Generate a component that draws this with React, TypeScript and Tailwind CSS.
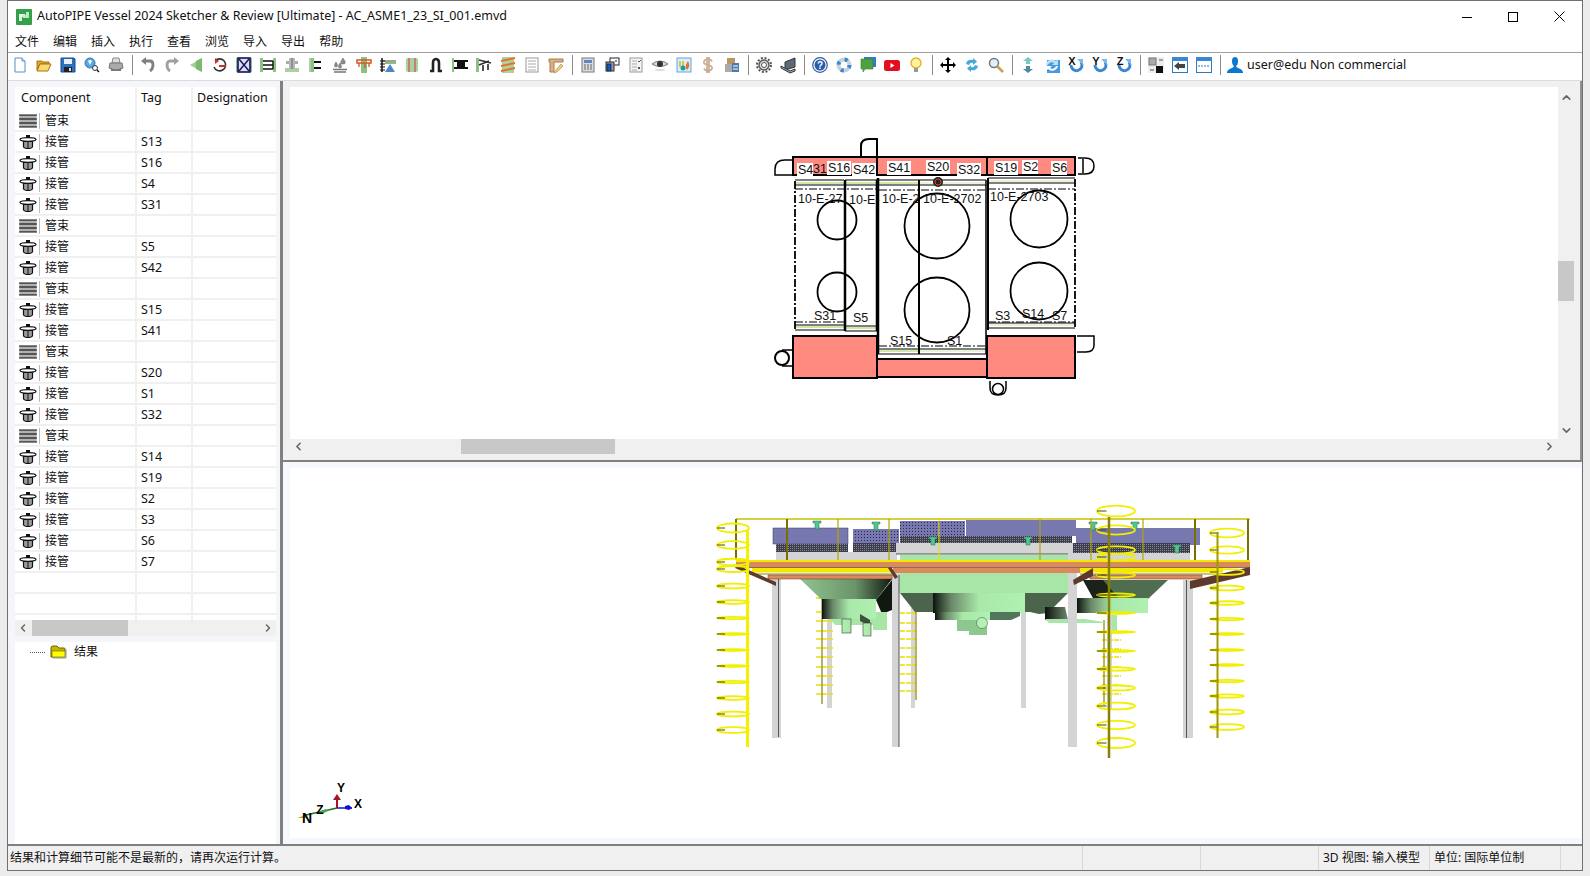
import React from 'react';
import { ChevronLeft, ChevronRight, ChevronUp, ChevronDown } from 'lucide-react';

const uiFont = "font-['Noto_Sans','Noto_Sans_CJK_SC',sans-serif]";

const menus = ['文件', '编辑', '插入', '执行', '查看', '浏览', '导入', '导出', '帮助'];

const rows: [string, string][] = [
  ['b', ''], ['n', 'S13'], ['n', 'S16'], ['n', 'S4'], ['n', 'S31'],
  ['b', ''], ['n', 'S5'], ['n', 'S42'],
  ['b', ''], ['n', 'S15'], ['n', 'S41'],
  ['b', ''], ['n', 'S20'], ['n', 'S1'], ['n', 'S32'],
  ['b', ''], ['n', 'S14'], ['n', 'S19'], ['n', 'S2'], ['n', 'S3'], ['n', 'S6'], ['n', 'S7'],
];

const BundleIcon = () => (
  <svg width="18" height="14" viewBox="0 0 18 14">
    <rect x="0.5" y="1" width="17" height="12" fill="#9a9a9a" />
    <path d="M0 1h18M0 5h18M0 9h18M0 13h18" stroke="#111" strokeWidth="1.2" />
    <path d="M0 3h18M0 7h18M0 11h18" stroke="#c8c8c8" strokeWidth="1" />
  </svg>
);

const NozzleIcon = () => (
  <svg width="18" height="14" viewBox="0 0 18 14">
    <rect x="7" y="0" width="4" height="3" fill="#111" />
    <ellipse cx="9" cy="4.5" rx="8" ry="1.8" fill="#fff" stroke="#111" strokeWidth="1.3" />
    <path d="M4.500 6.500h9v5.500q-1 1.500-4.500 1.500t-4.500-1.500z" fill="#9a9a9a" stroke="#111" strokeWidth="1.2" />
    <path d="M9 6.500v7" stroke="#111" strokeWidth="1" />
  </svg>
);

const G = '#8cc084';
const icons: Record<string, React.ReactNode> = {
  newDoc: <><path d="M3 1h7l3 3v11H3z" fill="#fff" stroke="#5b8ec4" /><path d="M10 1v3h3" fill="#dbe8f5" stroke="#5b8ec4" /></>,
  open: <><path d="M1 4h5l1 1h6v2H4L1 13z" fill="#e0a52e" stroke="#a87510" /><path d="M4 7h11l-3 7H1z" fill="#f8d870" stroke="#a87510" /></>,
  save: <><path d="M1 1h13l1 1v13H1z" fill="#2f6fc0" stroke="#1d4c8c" /><rect x="4" y="2" width="8" height="5" fill="#e8f0fa" /><rect x="4" y="10" width="8" height="5" fill="#222" /><rect x="9" y="11" width="2" height="3" fill="#ddd" /></>,
  find: <><circle cx="6" cy="6" r="5" fill="#58a8e0" stroke="#2e78b8" /><path d="M4 4q2-2 4 0l-2 4z" fill="#fff" /><circle cx="11" cy="11" r="2.5" fill="#fff" stroke="#333" /><path d="M13 13l2 2" stroke="#111" strokeWidth="1.5" /></>,
  print: <><path d="M5 1h6l1 5H4z" fill="#ddd" stroke="#888" /><path d="M2 6h12l1 5q-7 4-14 0z" fill="#aaa" stroke="#777" /><path d="M3 11q5 3 10 0v3H3z" fill="#777" /></>,
  undo: <><path d="M5 4h5q3 0 3 4t-3 6" fill="none" stroke="#808080" strokeWidth="2.800" /><path d="M6 0v8L1 4z" fill="#808080" /></>,
  redo: <><path d="M11 4H6q-3 0-3 4t3 6" fill="none" stroke="#a0a0a0" strokeWidth="2.800" /><path d="M10 0v8l5-4z" fill="#a0a0a0" /></>,
  greenLeft: <><path d="M14 1v14L2 8z" fill="#9dd08c" /><path d="M14 1v14l-6-3V4z" fill="#7cb870" /></>,
  loop: <><path d="M3 4a6 6 0 1 1-1 6" fill="none" stroke="#333" strokeWidth="1.6" /><path d="M7 4L3 1v6z" fill="#c43030" /><path d="M7 8h7v2H7z" fill="#c43030" /></>,
  xbox: <><rect x="0" y="1" width="2" height="14" fill={G} /><rect x="14" y="1" width="2" height="14" fill={G} /><rect x="2" y="1" width="12" height="14" fill="#dde" stroke="#12125e" strokeWidth="1.6" /><path d="M3 2l10 12M13 2L3 14" stroke="#12125e" strokeWidth="1.4" /></>,
  flange1: <><rect x="0" y="1" width="3" height="14" fill={G} /><rect x="13" y="1" width="3" height="14" fill={G} /><path d="M3 4h10M3 8h10M3 12h10" stroke="#111" strokeWidth="1.6" /><path d="M13 4v8" stroke="#111" strokeWidth="1.4" /></>,
  support: <><rect x="1" y="11" width="14" height="4" fill="#acd0a0" /><rect x="2" y="4" width="12" height="3" fill="#aaa" /><rect x="5" y="1" width="6" height="11" fill="#b8b8b8" /><path d="M8 1v11" stroke="#666" /></>,
  side: <><rect x="1" y="1" width="5" height="14" fill={G} /><rect x="1" y="1" width="2" height="14" fill="#acd0a0" /><path d="M6 5h7M6 11h7" stroke="#111" strokeWidth="2.2" /></>,
  drops: <><path d="M4 5c-2 3-2 5 0 5s2-2 0-5zM11 1c-3 4-3 6 0 6s3-2 0-6zM8 6c-2 3-2 5 0 5s2-2 0-5z" fill="#8a8a8a" stroke="#666" strokeWidth="0.500" /><path d="M1 12.500h14M2 15h12" stroke="#777" strokeWidth="1.5" /></>,
  clamp: <><rect x="5" y="0" width="6" height="16" fill={G} /><path d="M1 3h14v3H1z" fill="none" stroke="#d05a20" strokeWidth="1.5" /><path d="M3 6v4M13 6v4M9 6v5" stroke="#d05a20" strokeWidth="1.3" /></>,
  saddle: <><path d="M2 1v14" stroke="#111" strokeWidth="1.5" /><path d="M0 4h5M0 7h5M0 10h5M0 13h5" stroke="#111" /><path d="M3 4h13" stroke="#111" strokeWidth="0.8" /><path d="M10 7l5 8H5z" fill="#4a88c8" /><path d="M5 5h11v2H5z" fill="#8fbc80" /></>,
  cyl: <><rect x="2" y="1" width="12" height="14" rx="2" fill="#acd0a0" /><path d="M5 1v14M11 1v14" stroke="#c84040" /></>,
  omega: <path d="M2 14h3V6q0-4 3-4t3 4v8h3" fill="none" stroke="#222" strokeWidth="2.6" />,
  tbar: <><rect x="0" y="1" width="2" height="14" fill={G} /><path d="M2 4h14M2 11h14" stroke="#111" strokeWidth="2" /><rect x="5" y="4" width="8" height="7" fill="#111" /></>,
  hatch: <><rect x="0" y="1" width="3" height="14" fill={G} /><path d="M3 3l12 3M3 8l10-4M7 8v6M12 7v6" stroke="#333" strokeWidth="1.7" /></>,
  coil: <><rect x="2" y="0" width="12" height="16" fill="#acd0a0" /><path d="M1 4l14-3M1 9l14-3M1 14l14-3" stroke="#e87020" strokeWidth="1.8" /></>,
  list: <><rect x="2" y="1" width="12" height="14" fill="#fff" stroke="#999" /><path d="M4 4h8M4 7h8M4 10h8M4 13h8" stroke="#aaa" /></>,
  ruler: <><path d="M1 2h14v3H6v10H2V5H1z" fill="#dcb080" stroke="#a87c50" /><path d="M7 14l6-7 2 2-6 6-3 1z" fill="#f6d04c" stroke="#888" strokeWidth="0.6" /></>,
  calc: <><rect x="2" y="1" width="12" height="14" fill="#ddd" stroke="#777" /><rect x="4" y="3" width="8" height="3" fill="#5f84c8" /><path d="M4 8h2M7 8h2M10 8h2M4 10h2M7 10h2M10 10h2M4 12h2M7 12h2M10 12h2" stroke="#666" strokeWidth="1.2" /></>,
  cards: <><rect x="6" y="1" width="9" height="7" fill="#fff" stroke="#223" /><path d="M11 4h2" stroke="#223" /><rect x="2" y="5" width="8" height="9" fill="#999" stroke="#333" /><rect x="3" y="7" width="4" height="7" fill="#1058c8" stroke="#111" strokeWidth="0.6" /></>,
  check: <><rect x="2" y="1" width="12" height="14" fill="#f4f4f4" stroke="#999" /><path d="M4 4h5M4 7h5M4 10h5M4 13h5" stroke="#aaa" /><path d="M10 4l1 1 2-2M10 10l2 2M12 10l-2 2" stroke="#555" fill="none" /></>,
  eye: <><path d="M0 7q8-6 16 0q-8 5-16 0z" fill="#ddd" stroke="#777" /><circle cx="8" cy="7" r="3" fill="#333" /><ellipse cx="8" cy="13" rx="5" ry="1" fill="#ddd" /></>,
  chart: <><rect x="1" y="1" width="14" height="14" fill="#dcecfa" stroke="#5aa8e0" /><path d="M11 13q-3-3 1-9 3 5-1 9z" fill="#e87020" /><path d="M4 4v6M7 4v5" stroke="#d0c020" strokeWidth="1.6" /><circle cx="7" cy="11" r="2.500" fill="#2098a8" /></>,
  dollar: <path d="M12 4.500q-1-2.500-4-2.500t-4 2.500 4 3.500 4 3.500-4 2.500-4-2.500M7 0v16M9 0v16" fill="none" stroke="#c8aa90" strokeWidth="1.7" />,
  boxes: <><rect x="3" y="1" width="8" height="8" fill="#b89860" /><rect x="1" y="7" width="7" height="8" fill="#aaa" /><rect x="8" y="6" width="7" height="9" fill="#4a7cb0" /><path d="M9 9h5M9 12h5" stroke="#fff" /></>,
  gear: <><circle cx="8" cy="8" r="5" fill="#ddd" stroke="#555" strokeWidth="1.4" /><circle cx="8" cy="8" r="7" fill="none" stroke="#555" strokeWidth="2" strokeDasharray="2 1.7" /><circle cx="8" cy="8" r="2.500" fill="#fff" stroke="#555" /></>,
  laptop: <><path d="M5 5l10-4v9l-10 3z" fill="#5d6a78" stroke="#333" /><path d="M1 9l9 5 5-2v2l-5 2-9-5z" fill="#9ab0c0" stroke="#333" /></>,
  help: <><circle cx="8" cy="8" r="7.300" fill="#fff" stroke="#2a5ca8" strokeWidth="1.200" /><circle cx="8" cy="8" r="5.500" fill="#2a5ca8" /><text x="8" y="11.500" textAnchor="middle" fontSize="10" fontWeight="700" fill="#fff" fontFamily="Liberation Sans">?</text></>,
  buoy: <><circle cx="8" cy="8" r="5.500" fill="none" stroke="#c8d0d8" strokeWidth="4" /><circle cx="8" cy="8" r="5.500" fill="none" stroke="#3a88d0" strokeWidth="4" strokeDasharray="3 5.640" /></>,
  chat: <><rect x="4" y="0" width="12" height="10" fill="#2a80d0" /><path d="M1 2h12v10H5l-2 3v-3H1z" fill="#50a040" stroke="#3c8030" strokeWidth="0.6" /></>,
  youtube: <><rect x="0" y="3" width="16" height="11" rx="2.500" fill="#e01020" /><path d="M6.500 6v5l4-2.500z" fill="#fff" /></>,
  bulb: <><circle cx="8" cy="6" r="5" fill="#fff3a0" stroke="#e0b020" strokeWidth="1.300" /><rect x="6" y="11" width="4" height="4" fill="#999" /></>,
  move: <path d="M8 0l3 3H9v4h4V5l3 3-3 3V9H9v4h2l-3 3-3-3h2V9H3v2L0 8l3-3v2h4V3H5z" fill="#000" />,
  rotate: <><path d="M2 7q1-5 7-4V1l4 3.500L9 8V6q-3-1-4 2z" fill="#48a8d8" /><path d="M14 9q-1 5-7 4v2l-4-3.500L7 8v2q3 1 4-2z" fill="#48a8d8" /></>,
  zoom: <><circle cx="6" cy="6" r="4.500" fill="#dff0fa" stroke="#777" strokeWidth="1.500" /><path d="M9.500 9.500L15 15" stroke="#c8a050" strokeWidth="2.500" /></>,
  updown: <><path d="M8 0l5 4h-3v3H6V4H3z" fill="#78c8c8" /><path d="M8 16l5-4h-3V9H6v3H3z" fill="#4a8c9c" /></>,
  bluerot: <><rect x="3" y="3" width="13" height="13" fill="#4898e0" /><path d="M2 8a6 6 0 0 1 10-4l2-2v6H8l2-2a4 4 0 0 0-6 2z" fill="#b8e0f8" /><path d="M14 9a6 6 0 0 1-10 3l-2 2V9h6l-2 2a4 4 0 0 0 6-2z" fill="#fff" /></>,
  rotX: <><path d="M3 8a5.500 5.500 0 1 0 10-3" fill="none" stroke="#3a88d0" strokeWidth="3" /><path d="M9 2h6v6z" fill="#7ab8ec" /><text x="4" y="8" textAnchor="middle" fontSize="11" fontWeight="700" fill="#111" fontFamily="Liberation Sans">X</text></>,
  rotY: <><path d="M3 8a5.500 5.500 0 1 0 10-3" fill="none" stroke="#3a88d0" strokeWidth="3" /><path d="M9 2h6v6z" fill="#7ab8ec" /><text x="4" y="8" textAnchor="middle" fontSize="11" fontWeight="700" fill="#111" fontFamily="Liberation Sans">Y</text></>,
  rotZ: <><path d="M3 8a5.500 5.500 0 1 0 10-3" fill="none" stroke="#3a88d0" strokeWidth="3" /><path d="M9 2h6v6z" fill="#7ab8ec" /><text x="4" y="8" textAnchor="middle" fontSize="11" fontWeight="700" fill="#111" fontFamily="Liberation Sans">Z</text></>,
  swap: <><rect x="0" y="0" width="16" height="16" fill="#eee" /><rect x="1" y="1" width="7" height="7" fill="#aaa" stroke="#777" /><rect x="8" y="9" width="7" height="7" fill="#111" /><path d="M11 3h4M2 13h4" stroke="#555" /></>,
  back: <><rect x="0.500" y="0.500" width="15" height="15" fill="#fff" stroke="#2f78c8" /><rect x="0" y="0" width="16" height="4" fill="#3a88d0" /><path d="M2 9l5-4v2h6v4H7v2z" fill="#444" /></>,
  split: <><rect x="0.500" y="0.500" width="15" height="15" fill="#fff" stroke="#2f78c8" /><rect x="0" y="0" width="16" height="4" fill="#3a88d0" /><path d="M2 9h12" stroke="#2f78c8" strokeDasharray="2 1" /></>,
  user: <path d="M8 0q3 0 3 4t-2 5q0 1 2 2 4 1 5 4v1H0v-1q1-3 5-4 2-1 2-2-2-1-2-5t3-4z" fill="#0a78d0" />,
};

const toolbar = [
  'newDoc', 'open', 'save', 'find', 'print', '|',
  'undo', 'redo', 'greenLeft', 'loop', 'xbox', 'flange1', 'support', 'side', 'drops', 'clamp', 'saddle', 'cyl', 'omega', 'tbar', 'hatch', 'coil', 'list', 'ruler', '|',
  'calc', 'cards', 'check', 'eye', 'chart', 'dollar', 'boxes', '|',
  'gear', 'laptop', '|',
  'help', 'buoy', 'chat', 'youtube', 'bulb', '|',
  'move', 'rotate', 'zoom', '|',
  'updown', 'bluerot', 'rotX', 'rotY', 'rotZ', '|',
  'swap', 'back', 'split', '|',
];

const Toolbar = () => (
  <div className="flex h-[29px] items-center border-t border-b border-t-[#a0a0a0] border-b-[#dcdcdc] bg-white pb-[3px]">
    {toolbar.map((name, i) =>
      name === '|' ? (
        <div key={i} className="flex h-[20px] w-[8px] justify-center">
          <div className="h-full w-px bg-[#888]" />
        </div>
      ) : (
        <div key={i} className="flex w-[24px] justify-center">
          <svg width="16" height="16" viewBox="0 0 16 16" overflow="visible">{icons[name]}</svg>
        </div>
      ),
    )}
    <svg width="16" height="16" viewBox="0 0 16 16" className="ml-[3px]">{icons.user}</svg>
    <span className="ml-[4px] text-[12.5px] text-[#111]">user@edu Non commercial</span>
  </div>
);

const LeftPane = () => (
  <div className="flex h-full w-[272px] flex-col bg-[#f4f6fa] pl-[7px] pr-[4px] pt-[6px]">
    <div className="h-[533px] overflow-hidden bg-white text-[12.5px] text-[#111]">
      <div className="flex h-[24px] items-center">
        <div className="h-full w-[122px] border-r-2 border-r-[#f0f0f0] pl-[6px] leading-[22px]">Component</div>
        <div className="h-full w-[56px] border-r-2 border-r-[#f0f0f0] pl-[4px] leading-[22px]">Tag</div>
        <div className="h-full pl-[4px] leading-[22px]">Designation</div>
      </div>
      {rows.map(([kind, tag], i) => (
        <div key={i} className="flex h-[21px] border-b-2 border-b-[#f0f0f0]">
          <div className="flex w-[122px] items-center border-r-2 border-r-[#f0f0f0] pl-[4px]">
            {kind === 'b' ? <BundleIcon /> : <NozzleIcon />}
            <div className="ml-[2px] h-[16px] w-px bg-[#bbb]" />
            <span className="ml-[5px] text-[12px]">{kind === 'b' ? '管束' : '接管'}</span>
          </div>
          <div className="w-[56px] border-r-2 border-r-[#f0f0f0] pl-[4px] leading-[19px]">{tag}</div>
        </div>
      ))}
      {[0, 1, 2].map((i) => (
        <div key={i} className="flex h-[21px] border-b-2 border-b-[#f0f0f0]">
          <div className="w-[122px] border-r-2 border-r-[#f0f0f0]" />
          <div className="w-[56px] border-r-2 border-r-[#f0f0f0]" />
        </div>
      ))}
    </div>
    <div className="flex h-[16px] items-center bg-[#f0f0f0]">
      <ChevronLeft size={12} strokeWidth={3} className="ml-[2px] text-[#666]" />
      <div className="ml-[3px] h-full w-[96px] bg-[#c8c8c8]" />
      <ChevronRight size={12} strokeWidth={3} className="ml-auto mr-[2px] text-[#666]" />
    </div>
    <div className="mt-[6px] flex-1 bg-white">
      <div className="flex items-center pt-[1px] pl-[15px]">
        <div className="w-[15px] border-t border-dotted border-t-[#555]" />
        <svg width="17" height="14" viewBox="0 0 17 14" className="ml-[5px]">
          <path d="M1 3q0-2 2-2h4l2 2h5q1 0 1 1v8H1z" fill="#c8b400" stroke="#6a6000" />
          <rect x="2" y="6" width="13" height="6" fill="#ffff00" stroke="#6a6000" strokeWidth="0.6" />
          <path d="M16 4v9H3" stroke="#999" fill="none" />
        </svg>
        <span className="ml-[7px] text-[12px] text-[#111]">结果</span>
      </div>
    </div>
  </div>
);

const topLabels: [string, number, number][] = [
  ['S4', 798, 174], ['S16', 828, 172], ['S42', 853, 174], ['S41', 888, 172], ['S20', 927, 171], ['S32', 958, 174],
  ['S19', 995, 172], ['S2', 1023, 171], ['S6', 1052, 172],
];

// x, width, top, bottom of each bundle in the plan view
const bundles: [number, number, number, number][] = [
  [795, 49, 180, 330],
  [845, 32, 180, 331],
  [878, 41, 180, 354],
  [919, 67, 180, 354],
  [988, 87, 178, 328],
];

const TopSketch = () => (
  <svg width="1268" height="352" viewBox="290 87 1268 352" className="block bg-white font-['Liberation_Sans',sans-serif]">
    <g fill="#ff8a80" stroke="#000" strokeWidth="2">
      <rect x="793" y="157" width="282" height="18" />
      <rect x="793" y="336" width="84" height="42" />
      <rect x="877" y="359" width="110" height="18" />
      <rect x="987" y="336" width="88" height="42" />
    </g>
    <path d="M877 157v18M987 157v18" stroke="#000" strokeWidth="2" />
    <g fill="none" stroke="#000" strokeWidth="1.500">
      <path d="M793 175h-18v-6q0-9 10-9h8" />
      <path d="M861 157v-11q0-7 8-7h8v18" strokeWidth="2" />
      <path d="M1078 158h7q9 0 9 8t-9 8h-7M1083 159v14" />
      <circle cx="782" cy="358" r="7" strokeWidth="2" />
      <path d="M782 350h11M782 366h11" />
      <path d="M1077 336h17v9q0 7-8 7h-9" />
      <path d="M990 381v7q0 7 8 7t8-7v-7" />
      <circle cx="998" cy="389" r="5.500" />
    </g>
    {bundles.map(([x, w, t, b]) => (
      <g key={x}>
        <rect x={x} y={t} width={w} height={b - t} fill="#fff" />
        <rect x={x} y={t + 2} width={w} height={2} fill={w < 60 ? '#cfe8a8' : '#e8f4d8'} />
        <rect x={x} y={b - 4} width={w} height={2} fill={w < 60 ? '#cfe8a8' : '#e8f4d8'} />
        <path d={`M${x} ${t}h${w}M${x} ${t + 5}h${w}M${x} ${b}h${w}M${x} ${b - 5}h${w}`} stroke="#000" strokeWidth="1.200" />
      </g>
    ))}
    <path d="M795 181v149M1075 179v149" stroke="#000" strokeWidth="1.800" strokeDasharray="8 2 2 2" />
    <path d="M845 180v151M877 180v151M878 178v176" stroke="#000" strokeWidth="2.500" />
    <path d="M919 180v174M986 180v174" stroke="#000" strokeWidth="1.500" />
    <path d="M988 178v152" stroke="#000" strokeWidth="2" />
    <g stroke="#000" strokeWidth="1" strokeDasharray="8 2 2 2">
      <path d="M795 189h82M879 190h107M988 189h87M795 322h49M879 346h107M988 322h87" />
    </g>
    <g fill="none" stroke="#000" strokeWidth="1.800">
      <circle cx="837" cy="220" r="19.500" />
      <circle cx="837" cy="292" r="19.500" />
      <circle cx="937" cy="226" r="32.500" />
      <circle cx="937" cy="310" r="32.500" />
      <circle cx="1039" cy="219" r="28.500" />
      <circle cx="1039" cy="291" r="28.500" />
    </g>
    <path d="M845 180v151M919 180v174" stroke="#000" strokeWidth="2" />
    <circle cx="938" cy="182" r="5" fill="#222" />
    <circle cx="938" cy="182" r="3" fill="none" stroke="#e04020" />
    {topLabels.map(([t, x, y]) => (
      <g key={t}>
        <rect x={x - 1} y={y - 11} width={t.length * 8} height={14} fill="#fff" />
        <text x={x} y={y} fontSize="12.500" fill="#111">{t}</text>
      </g>
    ))}
    <g fontSize="12.500" fill="#111">
      <text x="813" y="173">31</text>
      <text x="798" y="203">10-E-27</text>
      <text x="849" y="204">10-E-</text>
      <text x="882" y="203">10-E-2</text>
      <text x="923" y="203">10-E-2702</text>
      <text x="990" y="201">10-E-2703</text>
      <text x="814" y="320">S31</text>
      <text x="853" y="322">S5</text>
      <text x="890" y="345">S15</text>
      <text x="947" y="345">S1</text>
      <text x="995" y="320">S3</text>
      <text x="1022" y="318">S14</text>
      <text x="1052" y="320">S7</text>
    </g>
  </svg>
);

type CoilProps = { cx: number; rx: number; ys: number[]; mid: number; k: number; axis: number; top: number; bottom: number; axisColor: string; axisWidth: number };

const Coil = ({ cx, rx, ys, mid, k, axis, top, bottom, axisColor, axisWidth }: CoilProps) => (
  <g>
    {ys.map((y) => {
      const ry = Math.max(0.8, Math.abs(y - mid) * k);
      return (
        <g key={y}>
          <ellipse cx={cx} cy={y} rx={rx} ry={ry} fill="none" stroke="#f0f000" strokeWidth="1.800" />
          <path d={`M${cx - rx} ${y}h${rx * 0.5}`} stroke="#4a4400" strokeWidth="1" />
        </g>
      );
    })}
    <path d={`M${axis} ${top}V${bottom}`} stroke={axisColor} strokeWidth={axisWidth} />
  </g>
);

const Flat = ({ x, w, ys, axis, top, bottom }: { x: number; w: number; ys: number[]; axis: number; top: number; bottom: number }) => (
  <g>
    {ys.map((y) => (
      <path key={y} d={`M${x} ${y}h${w}`} stroke="#e8e000" strokeWidth="1.500" strokeDasharray="5 1" />
    ))}
    <path d={`M${axis} ${top}V${bottom}`} stroke="#8a8000" strokeWidth="1.200" />
  </g>
);

const Tee = ({ x, y }: { x: number; y: number }) => (
  <g transform={`translate(${x} ${y})`}>
    <path d="M-4 0h8v2h-2v6h-4v-6h-2z" fill="#50c890" stroke="#207050" strokeWidth="0.500" />
  </g>
);

const BottomSketch = () => (
  <svg width="1291" height="370" viewBox="290 468 1291 370" className="block bg-white font-['Liberation_Sans',sans-serif]">
    <defs>
      <linearGradient id="cyl" x1="0" x2="1" y1="0" y2="0">
        <stop offset="0" stopColor="#0c120c" />
        <stop offset="0.06" stopColor="#2a3a2a" />
        <stop offset="0.2" stopColor="#6a8a6a" />
        <stop offset="0.5" stopColor="#a8e8a8" />
        <stop offset="1" stopColor="#b0f0b0" />
      </linearGradient>
      <linearGradient id="cylDark" x1="0" x2="1" y1="0" y2="0">
        <stop offset="0" stopColor="#0c120c" />
        <stop offset="1" stopColor="#708870" />
      </linearGradient>
      <linearGradient id="cyl2" x1="0" x2="1" y1="0" y2="0">
        <stop offset="0" stopColor="#b0f0b0" />
        <stop offset="1" stopColor="#a8e6a8" />
      </linearGradient>
      <linearGradient id="cone" x1="0" x2="1" y1="0" y2="0">
        <stop offset="0" stopColor="#90c490" />
        <stop offset="0.6" stopColor="#6a946a" />
        <stop offset="1" stopColor="#101810" />
      </linearGradient>
      <pattern id="mesh" width="3" height="3" patternUnits="userSpaceOnUse">
        <rect width="3" height="3" fill="#7878b0" />
        <rect width="1" height="1" fill="#2a2a48" />
      </pattern>
      <pattern id="dark" width="2" height="2" patternUnits="userSpaceOnUse">
        <rect width="2" height="2" fill="#3c3c50" />
        <rect width="1" height="1" fill="#8a8a8a" />
      </pattern>
    </defs>

    {/* columns at the back */}
    <g fill="#d4d4d4">
      <rect x="827" y="618" width="5" height="90" />
      <rect x="1021" y="612" width="5" height="96" />
      <rect x="1107" y="615" width="5" height="95" />
      <rect x="911" y="608" width="4" height="100" />
    </g>
    <Flat x={816} w={17} ys={[598, 612, 621, 631, 639, 648, 657, 667, 676, 685, 694]} axis={822} top={595} bottom={704} />
    <Flat x={900} w={16} ys={[613, 623, 631, 639, 648, 657, 665, 674, 683, 691]} axis={916} top={600} bottom={700} />
    <Flat x={1102} w={19} ys={[640, 649, 657, 667, 676, 685, 694]} axis={1104} top={620} bottom={705} />

    {/* vessels */}
    <rect x="773" y="528" width="75" height="16" fill="#7878b0" stroke="#3a3a60" strokeWidth="0.500" />
    <rect x="776" y="544" width="72" height="8" fill="url(#dark)" />
    <rect x="776" y="552" width="121" height="8" fill="#d4d4d4" />
    <rect x="853" y="529" width="46" height="14" fill="url(#mesh)" />
    <rect x="853" y="543" width="46" height="9" fill="url(#dark)" />
    <rect x="900" y="521" width="65" height="15" fill="url(#mesh)" />
    <rect x="966" y="520" width="110" height="16" fill="#7878b0" />
    <rect x="900" y="536" width="172" height="8" fill="url(#dark)" />
    <rect x="896" y="543" width="177" height="11" fill="#d4d4d4" />
    <path d="M896 554h177" stroke="#555" strokeWidth="1" />
    <rect x="900" y="555" width="168" height="5" fill="#a8e6a8" />
    <rect x="1076" y="528" width="124" height="17" fill="#7878b0" />
    <rect x="1073" y="543" width="117" height="10" fill="url(#dark)" />
    <rect x="1068" y="553" width="122" height="7" fill="#d4d4d4" />
    <Tee x={817} y={521} />
    <Tee x={876} y={522} />
    <Tee x={933} y={537} />
    <Tee x={1028} y={537} />
    <Tee x={1093} y={522} />
    <Tee x={1135} y={522} />
    <Tee x={1177} y={545} />

    {/* hoppers */}
    <path d="M800 579h92l-16 21h-54z" fill="url(#cone)" />
    <path d="M876 600l16-20v30l-10 4z" fill="#101810" />
    <path d="M825 612h62v18h-14v-5h-38z" fill="#a8e6a8" />
    <rect x="822" y="599" width="54" height="20" fill="url(#cyl)" />
    <path d="M860 614l10 6v6l-10-5z" fill="#3c523c" />
    <rect x="842" y="619" width="9" height="14" fill="url(#cyl2)" stroke="#222" strokeWidth="0.500" />
    <rect x="863" y="623" width="8" height="13" fill="url(#cyl2)" stroke="#222" strokeWidth="0.500" />

    <rect x="899" y="573" width="169" height="20" fill="#a8e6a8" />
    <path d="M900 593h168l-20 20-9 1-9-2H915z" fill="#4c644c" />
    <rect x="933" y="593" width="92" height="20" fill="url(#cyl)" />
    <rect x="935" y="612" width="55" height="8" fill="url(#cyl)" />
    <path d="M990 612h30v4l-9 4h-21z" fill="#52765a" />
    <path d="M957 620h30v15h-18v-4h-12z" fill="#8ec88e" />
    <circle cx="982" cy="623" r="5.500" fill="#b6f0b6" stroke="#3c523c" strokeWidth="0.500" />

    <path d="M1083 580h85l-20 19h-54z" fill="#4f6e4f" />
    <path d="M1083 580h20l17 20h-26z" fill="#1a221a" />
    <rect x="1077" y="598" width="71" height="15" fill="url(#cyl)" />
    <path d="M1045 607h20l3 13h-23z" fill="url(#cylDark)" />
    <path d="M1045 619h40l24 4h-60z" fill="#a8e6a8" />
    <rect x="1112" y="615" width="5" height="16" fill="#a8e6a8" />

    {/* columns in front */}
    <g fill="#d4d4d4">
      <rect x="772" y="579" width="9" height="159" />
      <rect x="892" y="573" width="7" height="174" />
      <rect x="1068" y="573" width="9" height="174" />
      <rect x="1183" y="580" width="10" height="158" />
    </g>
    <path d="M778.500 579v158M899 575v172M1186.500 580v158" stroke="#555" strokeWidth="1" />

    {/* platform */}
    <path d="M752 570h140M1080 570h143" stroke="#f4e800" strokeWidth="5" />
    <path d="M752 574h140M1080 574h143" stroke="#6a6000" strokeWidth="0.800" />
    <rect x="768" y="575" width="124" height="4" fill="#dc8a5c" stroke="#5a3a2a" strokeWidth="0.500" />
    <rect x="1090" y="575" width="112" height="4" fill="#dc8a5c" stroke="#5a3a2a" strokeWidth="0.500" />
    <rect x="893" y="568" width="187" height="5" fill="#dc8a5c" />
    <rect x="736" y="562" width="514" height="5" fill="#dc8a5c" />
    <path d="M736 561h514" stroke="#f4e800" strokeWidth="2" />
    <path d="M736 567.500h514" stroke="#6a4a30" strokeWidth="0.800" />
    <path d="M735 568l2-3 39 17v4zM888 568l3-1 7 10-3 2z" fill="#5e3a2c" />
    <path d="M1073 580l20-12v8l-19 9zM1190 581l60-14v8l-60 14z" fill="#5e3a2c" />

    {/* railing */}
    <path d="M736 519h514" stroke="#c8c000" strokeWidth="1.500" />
    <path d="M736 519v41M787 519v41M1195 519v41M1248 519v41" stroke="#7a7000" strokeWidth="2" />
    <path d="M838 519v41M889 519v41M1040 519v41M1091 519v41M1143 519v41" stroke="#b0a800" strokeWidth="1.200" />
    <path d="M939 519v41" stroke="#e8e000" strokeWidth="1" />

    {/* ladders */}
    <Coil cx={733} rx={16} ys={[528, 545, 562, 569, 586, 602, 618, 634, 650, 666, 682, 698, 714, 730]} mid={650} k={0.037} axis={747.500} top={530} bottom={747} axisColor="#f4f000" axisWidth={3} />
    <Coil cx={1116} rx={19} ys={[511, 530, 550, 557, 575, 595, 613, 632, 651, 669, 688, 706, 725, 743]} mid={632} k={0.045} axis={1109} top={517} bottom={758} axisColor="#8a8000" axisWidth={2.500} />
    <Coil cx={1227} rx={17} ys={[533, 550, 572, 588, 603, 619, 634, 650, 665, 681, 696, 712, 727]} mid={650} k={0.037} axis={1217.500} top={532} bottom={738} axisColor="#a09800" axisWidth={2} />

    {/* triad */}
    <path d="M306 815l31-7" stroke="#207020" strokeWidth="1.500" />
    <path d="M297 818l9-3 2 3z" fill="#b0a820" />
    <path d="M318 812l8-3 2 2-6 3z" fill="#48a848" />
    <path d="M337 808v-12" stroke="#b01020" strokeWidth="2" />
    <path d="M337 794l4 6h-8z" fill="#a01828" />
    <path d="M337 808h15" stroke="#1010d0" strokeWidth="1.500" />
    <path d="M345 806l4-1 3 3-3 2-4-1z" fill="#1010d0" />
    <g fontSize="12" fontWeight="700" fill="#000" textAnchor="middle">
      <text x="341" y="792">Y</text>
      <text x="358" y="808">X</text>
      <text x="320" y="814">Z</text>
      <text x="307" y="823" fontSize="14">N</text>
    </g>
  </svg>
);

const RightPane = () => (
  <div className="flex flex-1 flex-col">
    <div className="flex h-[381px] flex-col border-r-2 border-b-2 border-r-[#909090] border-b-[#808080] bg-[#f0f0f0] pl-[7px] pt-[6px]">
      <div className="flex">
        <TopSketch />
        <div className="flex h-[352px] w-[16px] flex-col items-center">
          <ChevronUp size={13} strokeWidth={3} className="mt-[4px] text-[#666]" />
          <div className="mt-[157px] h-[40px] w-full bg-[#c8c8c8]" />
          <ChevronDown size={13} strokeWidth={3} className="mt-auto mb-[2px] text-[#666]" />
        </div>
      </div>
      <div className="flex h-[15px] w-[1284px] items-center">
        <ChevronLeft size={13} strokeWidth={3} className="ml-[2px] text-[#666]" />
        <div className="ml-[156px] h-full w-[154px] bg-[#c8c8c8]" />
        <ChevronRight size={13} strokeWidth={3} className="ml-[928px] text-[#666]" />
      </div>
    </div>
    <div className="flex-1 bg-[#f5f8fc] pl-[7px] pt-[6px]">
      <BottomSketch />
    </div>
  </div>
);

export default function App() {
  return (
    <div className={`h-[876px] w-[1590px] overflow-hidden bg-[#ececec] pl-[7px] ${uiFont}`}>
      <div className="flex h-[871px] w-[1576px] flex-col border border-[#707070] bg-white">
        <div className="flex h-[31px] items-center pl-[8px]">
          <svg width="16" height="16" viewBox="0 0 16 16">
            <rect width="16" height="16" rx="1" fill="#35a04a" />
            <path d="M3 5h6v3H6v4H3z" fill="#e8f8ea" />
            <path d="M7 9h6V3h-3v3H7z" fill="#bfe8c6" />
          </svg>
          <span className="ml-[5px] text-[12.5px] text-[#111]">AutoPIPE Vessel 2024 Sketcher &amp; Review [Ultimate] - AC_ASME1_23_SI_001.emvd</span>
          <div className="ml-auto flex">
            <div className="flex h-[30px] w-[46px] items-center justify-center">
              <svg width="10" height="10" viewBox="0 0 10 10" shapeRendering="crispEdges"><path d="M0 5.500h10" stroke="#000" /></svg>
            </div>
            <div className="flex h-[30px] w-[46px] items-center justify-center">
              <svg width="10" height="10" viewBox="0 0 10 10" shapeRendering="crispEdges"><rect x="0.500" y="0.500" width="9" height="9" fill="none" stroke="#000" /></svg>
            </div>
            <div className="flex h-[30px] w-[46px] items-center justify-center">
              <svg width="11" height="11" viewBox="0 0 11 11"><path d="M0.500 0.500l10 10M10.500 0.500l-10 10" stroke="#000" /></svg>
            </div>
          </div>
        </div>
        <div className="flex h-[20px] items-center text-[12px] text-[#111]">
          {menus.map((m) => (
            <span key={m} className="px-[7px]">{m}</span>
          ))}
        </div>
        <Toolbar />
        <div className="flex flex-1">
          <LeftPane />
          <div className="w-[3px] bg-[#808080]" />
          <RightPane />
        </div>
        <div className="flex h-[26px] items-center border-t-2 border-t-[#808080] bg-[#f0f0f0] text-[12px] text-[#111]">
          <div className="flex-1 pl-[2px]">结果和计算细节可能不是最新的，请再次运行计算。</div>
          <div className="h-full w-[118px] border-l border-l-[#d8d8d8]" />
          <div className="h-full w-[118px] border-l border-l-[#d8d8d8]" />
          <div className="h-full w-[111px] border-l border-l-[#d8d8d8] pl-[4px] leading-[23px]">3D 视图: 输入模型</div>
          <div className="h-full w-[131px] border-l border-l-[#d8d8d8] pl-[4px] leading-[23px]">单位: 国际单位制</div>
          <div className="h-full w-[22px] border-l border-l-[#d8d8d8]" />
        </div>
      </div>
    </div>
  );
}
